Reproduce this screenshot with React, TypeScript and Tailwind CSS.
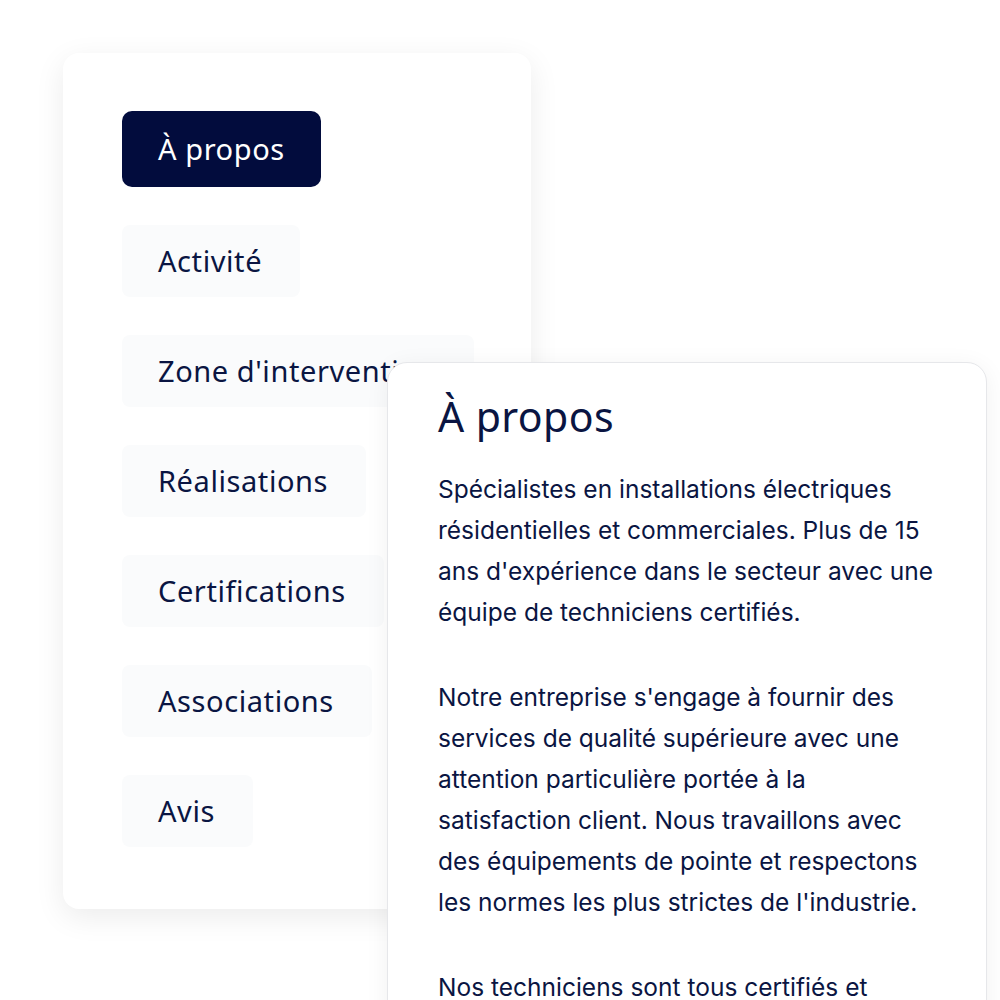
import React from "react";

const navItems = [
  "À propos",
  "Activité",
  "Zone d'intervention",
  "Réalisations",
  "Certifications",
  "Associations",
  "Avis",
];

const paragraphs = [
  "Spécialistes en installations électriques résidentielles et commerciales. Plus de 15 ans d'expérience dans le secteur avec une équipe de techniciens certifiés.",
  "Notre entreprise s'engage à fournir des services de qualité supérieure avec une attention particulière portée à la satisfaction client. Nous travaillons avec des équipements de pointe et respectons les normes les plus strictes de l'industrie.",
  "Nos techniciens sont tous certifiés et formés aux dernières technologies.",
];

export default function App() {
  const active = "À propos";

  return (
    <div className="relative h-[1000px] w-[1000px] overflow-hidden bg-white">
      {/* Sidebar card */}
      <aside className="ml-[63px] mt-[53px] flex h-[856px] w-[468px] flex-col items-start gap-[38px] rounded-2xl bg-white pl-[59px] pt-[58px] shadow-[0_8px_30px_rgba(0,0,0,0.08)]">
        {navItems.map((item) => (
          <button
            key={item}
            className={
              item === active
                ? "flex h-[76px] items-center whitespace-nowrap rounded-[10px] bg-[#020c3d] px-9 text-[29px] tracking-[0.02em] text-white"
                : "flex h-[72px] items-center whitespace-nowrap rounded-lg bg-[#fafbfc] pl-9 pr-[38px] text-[29px] tracking-[0.02em] text-[#0a1542]"
            }
            style={{ fontFamily: '"Noto Sans", sans-serif', fontWeight: 450 }}
          >
            {item}
          </button>
        ))}
      </aside>

      {/* Detail card */}
      <section className="absolute left-[387px] top-[362px] h-[700px] w-[600px] rounded-[20px] border border-[#e6e7ea] bg-white pl-[50px] pt-[28px] shadow-[0_4px_24px_rgba(0,0,0,0.06)]">
        <h2
          className="text-[41px] leading-[50px] tracking-[0.01em] text-[#0a1542]"
          style={{ fontFamily: '"Noto Sans", sans-serif', fontWeight: 450 }}
        >
          À propos
        </h2>
        <div
          className="mt-[28px] flex w-[500px] flex-col gap-[44px] text-[24.5px] leading-[41px] text-[#0a1542]"
          style={{ fontFamily: "Inter, sans-serif" }}
        >
          {paragraphs.map((p, i) => (
            <p key={i}>{p}</p>
          ))}
        </div>
      </section>
    </div>
  );
}
